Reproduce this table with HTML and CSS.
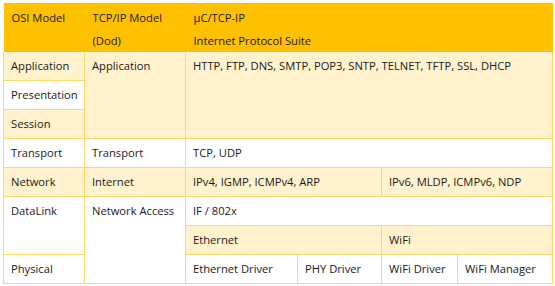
FILE: index.html
```
<!DOCTYPE html>
<html lang="en">
<head>
  <meta charset="UTF-8" />
  <title>OSI vs TCP/IP</title>
  <link rel="stylesheet" href="styles.css">
</head>
<body>
  <table class="layers">
    <colgroup>
      <col class="c-osi">
      <col class="c-tcp">
      <col class="c-a">
      <col class="c-b">
      <col class="c-c">
      <col class="c-d">
    </colgroup>
    <thead>
      <tr>
        <th>OSI Model<br>&nbsp;</th>
        <th>TCP/IP Model<br>(Dod)</th>
        <th colspan="4">µC/TCP-IP<br>Internet Protocol Suite</th>
      </tr>
    </thead>
    <tbody>
      <tr class="light">
        <td>Application</td>
        <td rowspan="3">Application</td>
        <td rowspan="3" colspan="4">HTTP, FTP, DNS, SMTP, POP3, SNTP, TELNET, TFTP, SSL, DHCP</td>
      </tr>
      <tr>
        <td class="white">Presentation</td>
      </tr>
      <tr class="light">
        <td>Session</td>
      </tr>
      <tr>
        <td>Transport</td>
        <td>Transport</td>
        <td colspan="4">TCP, UDP</td>
      </tr>
      <tr class="light">
        <td>Network</td>
        <td>Internet</td>
        <td colspan="2">IPv4, IGMP, ICMPv4, ARP</td>
        <td colspan="2">IPv6, MLDP, ICMPv6, NDP</td>
      </tr>
      <tr>
        <td rowspan="2">DataLink</td>
        <td rowspan="3">Network Access</td>
        <td colspan="4">IF / 802x</td>
      </tr>
      <tr>
        <td colspan="2" class="tint">Ethernet</td>
        <td colspan="2" class="tint">WiFi</td>
      </tr>
      <tr>
        <td>Physical</td>
        <td>Ethernet Driver</td>
        <td>PHY Driver</td>
        <td>WiFi Driver</td>
        <td>WiFi Manager</td>
      </tr>
    </tbody>
  </table>
</body>
</html>
```

FILE: styles.css
```
body {
  margin: 0;
  padding: 3px;
  background: #ffffff;
  font-family: "Open Sans", "Noto Sans", sans-serif;
  font-size: 11.2px;
  color: #1a1a1a;
}

.layers {
  border-collapse: collapse;
  table-layout: fixed;
  width: 549px;
}

.c-osi { width: 81px; }
.c-tcp { width: 101px; }
.c-a { width: 112px; }
.c-b { width: 84px; }
.c-c { width: 76px; }
.c-d { width: 95px; }

.layers th {
  background: #ffc000;
  font-weight: normal;
  text-align: left;
  vertical-align: top;
  padding: 3px 8px 0;
  line-height: 23px;
  border: none;
}

.layers td {
  border: 1px solid #ffd966;
  padding: 0 7px;
  height: 28px;
  vertical-align: top;
  line-height: 27px;
  white-space: nowrap;
  background: #ffffff;
}

.layers tr.light td {
  background: #fff2cc;
}

.layers tr.light td.white,
.layers td.white {
  background: #ffffff;
}

.layers td.tint {
  background: #fff2cc;
}

.layers tbody tr:first-child td {
  border-top: none;
}
```
